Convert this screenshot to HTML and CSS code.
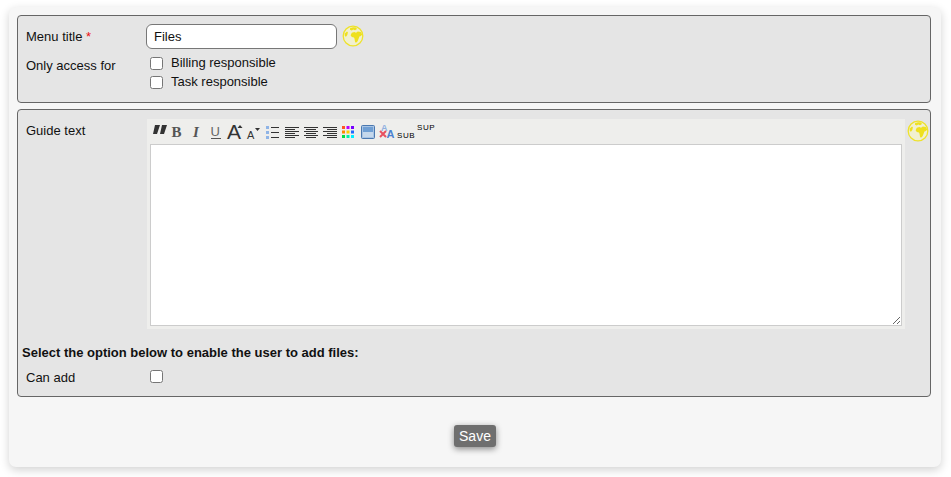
FILE: index.html
```html
<!DOCTYPE html>
<html lang="en">
<head>
<meta charset="utf-8">
<title>Files</title>
<link rel="stylesheet" href="styles.css">
</head>
<body>
<svg class="defs" width="0" height="0" aria-hidden="true">
  <symbol id="globe" viewBox="0 0 22 22">
    <circle cx="11" cy="11" r="9.800" fill="#f1f0cf" stroke="#eee22a" stroke-width="1.300"/>
    <path fill="#eee01e" d="M8 3.200 11 2.200l3 .4 1 1.400-2 1.200-1.800-.6-1.400.8-1.800-.6zM8.600 10.200l1.200-2.400 2.600-.8 1.600.8 1.800-1.200 3 .4 1.400 2.800-1.800 1.400-1 .2-.8 2.400-1 2.400-1.600 1.600-.9-.8-.6-3.200-.5-1.400-2.200-.4z"/>
    <path fill="#eee01e" d="M2.800 8.600 5 6.400l.9.8-.6 2.800-1.300 1.800-1.200-.8z"/>
  </symbol>
</svg>
<main class="card">
  <section class="panel panel-title">
    <div class="row row-title">
      <span class="label">Menu title <span class="req">*</span></span>
      <input class="text-input" type="text" value="Files">
      <svg class="globe" width="22" height="22"><use href="#globe"/></svg>
    </div>
    <div class="row row-access">
      <span class="label">Only access for</span>
      <div class="checks">
        <label class="check"><input type="checkbox"><span>Billing responsible</span></label>
        <label class="check"><input type="checkbox"><span>Task responsible</span></label>
      </div>
    </div>
  </section>
  <section class="panel panel-guide">
    <div class="row row-guide">
      <span class="label label-guide">Guide text</span>
      <div class="editor">
        <div class="toolbar">
          <svg class="tool" viewBox="0 0 16 16"><path fill="#333" d="M4 1h5L6 10H2zM11 1h5l-3 9H9z"/></svg>
          <svg class="tool" viewBox="0 0 16 16"><text x="1.500" y="13" class="t-serif t-b">B</text></svg>
          <svg class="tool" viewBox="0 0 16 16"><text x="4" y="13" class="t-serif t-i">I</text></svg>
          <svg class="tool" viewBox="0 0 16 16"><text x="2.500" y="12" class="t-sans t-u">U</text><path stroke="#555" d="M3 14.500h10"/></svg>
          <svg class="tool" viewBox="0 0 16 16"><text x="0" y="15" class="t-sans t-big">A</text><path fill="#333" d="M10.500 4 13 1l2.500 3z"/></svg>
          <svg class="tool" viewBox="0 0 16 16"><text x="1" y="15" class="t-sans t-small">A</text><path fill="#333" d="M9 4h5l-2.500 3z"/></svg>
          <svg class="tool" viewBox="0 0 16 16"><path fill="#8fb4e6" d="M1 2h3v3H1zM1 7h3v3H1zM1 12h3v3H1z"/><path stroke="#333" d="M6 3.500h8M6 8.500h8M6 13.500h8"/></svg>
          <svg class="tool" viewBox="0 0 16 16"><path stroke="#333" d="M1 3.500h14M1 5.500h10M1 7.500h14M1 9.500h10M1 11.500h14M1 13.500h10"/></svg>
          <svg class="tool" viewBox="0 0 16 16"><path stroke="#333" d="M1 3.500h14M3 5.500h10M1 7.500h14M3 9.500h10M1 11.500h14M3 13.500h10"/></svg>
          <svg class="tool" viewBox="0 0 16 16"><path stroke="#333" d="M1 3.500h14M5 5.500h10M1 7.500h14M5 9.500h10M1 11.500h14M5 13.500h10"/></svg>
          <svg class="tool" viewBox="0 0 16 16"><path fill="#f52" d="M1 2h3v3H1z"/><path fill="#b0f" d="M5.500 2h3v3h-3z"/><path fill="#70f" d="M10 2h3v3h-3z"/><path fill="#f80" d="M1 6.500h3v3H1z"/><path fill="#fc0" d="M5.500 6.500h3v3h-3z"/><path fill="#26f" d="M10 6.500h3v3h-3z"/><path fill="#0d4" d="M1 11h3v3H1z"/><path fill="#0ea" d="M5.500 11h3v3h-3z"/><path fill="#0ef" d="M10 11h3v3h-3z"/></svg>
          <svg class="tool" viewBox="0 0 16 16"><rect x="1.500" y="1.500" width="13" height="13" rx="1" fill="#a8c4e4" stroke="#4a78b0"/><rect x="3" y="3" width="10" height="5" fill="#6f9fd4"/><rect x="3" y="8" width="10" height="5" fill="#c5d8ec"/></svg>
          <svg class="tool" viewBox="0 0 16 16"><text x="2" y="7" class="t-sans t-rem">A</text><text x="7.500" y="14" class="t-sans t-rem2">A</text><path stroke="#e85060" stroke-width="2" d="M1 7l6 6M7 7l-6 6"/></svg>
          <svg class="tool" viewBox="0 0 16 16"><text x="-1" y="14" class="t-sup">SUB</text></svg>
          <svg class="tool" viewBox="0 0 16 16"><text x="0" y="6" class="t-sup">SUP</text></svg>
        </div>
        <textarea class="area"></textarea>
      </div>
      <svg class="globe globe-guide" width="22" height="22"><use href="#globe"/></svg>
    </div>
    <p class="note">Select the option below to enable the user to add files:</p>
    <div class="row row-can">
      <span class="label">Can add</span>
      <input class="box-solo" type="checkbox">
    </div>
  </section>
  <div class="actions"><button class="save" type="button">Save</button></div>
</main>
</body>
</html>
```
FILE: styles.css
```css
* { box-sizing: border-box; }
html, body { margin: 0; padding: 0; background: #fff; }
body {
  width: 951px;
  height: 477px;
  overflow: hidden;
  font-family: "Liberation Sans", Arial, sans-serif;
  font-size: 13px;
  color: #111;
}
.defs { position: absolute; }
.card {
  margin: 7px 10px 0 9px;
  height: 460px;
  padding: 8px 10px 0 8px;
  background: #f6f6f6;
  border-radius: 7px;
  box-shadow: 0 3px 10px rgba(0,0,0,.18);
}
.panel {
  background: #e5e5e5;
  border: 1px solid #666;
  border-radius: 4px;
}
.panel-title { height: 88px; padding: 8px 0 0 8px; }
.panel-guide { height: 288px; margin-top: 6px; padding: 9px 0 0 4px; }
.row { display: flex; align-items: flex-start; }
.label { width: 120px; flex: none; }
.label-guide { padding-top: 4px; }
.req { color: #e11; }
.row-title { align-items: center; height: 25px; }
.text-input {
  width: 191px;
  height: 25px;
  padding: 0 7px;
  border: 1px solid #777;
  border-radius: 6px;
  background: #fff;
  font: 13px "Liberation Sans", Arial, sans-serif;
  color: #111;
}
.globe { margin-left: 5px; flex: none; }
.row-title .globe { margin-top: -2px; }
.row-access { margin-top: 3px; padding-top: 0; }
.row-access .label { padding-top: 6px; }
.checks { display: flex; flex-direction: column; margin-left: 4px; gap: 3px; margin-top: 3px;}
.check { display: flex; align-items: center; height: 16px; }
.check input, .box-solo {
  width: 13px;
  height: 13px;
  margin: 0;
  flex: none;
}
.check span { margin-left: 8px; position: relative; top: -1px; }
.row-guide { padding-left: 4px; }
.editor {
  width: 758px;
  height: 210px;
  margin-left: 1px;
  padding: 0 3px;
  background: #eeeeec;
  flex: none;
}
.toolbar { display: flex; gap: 3px; height: 25px; padding: 5px 0 0 1px; }
.tool { width: 16px; height: 16px; flex: none; display: block; overflow: visible; }
.area {
  display: block;
  width: 752px;
  height: 182px;
  margin: 0;
  border: 1px solid #ccc;
  background: #fff;
}
.globe-guide { margin-left: 2px; margin-top: 1px; }
.note { margin: 16px 0 0; font-weight: bold; font-size: 13px; line-height: 15px; }
.row-can { margin-top: 9px; padding-left: 4px; align-items: center; height: 16px; }
.box-solo { margin-left: 4px; position: relative; top: -1px; }
.actions { display: flex; justify-content: center; padding-top: 28px; padding-left: 2px; }
.save {
  height: 22px;
  width: 42px;
  padding: 0;
  border: 0;
  border-radius: 3px;
  background: #6f6f6f;
  color: #fff;
  font: 14px "Liberation Sans", Arial, sans-serif;
  box-shadow: 0 2px 6px rgba(0,0,0,.45);
}
.t-serif { font-family: "Liberation Serif", serif; fill: #555; }
.t-sans { font-family: "Liberation Sans", sans-serif; fill: #333; }
.t-b { font-size: 15px; font-weight: bold; }
.t-i { font-size: 15px; font-style: italic; font-weight: bold; }
.t-u { font-size: 13px; fill: #666; }
.t-big { font-size: 21px; }
.t-small { font-size: 11px; }
.t-rem { font-size: 9px; fill: #8fb0e0; font-weight: bold; }
.t-rem2 { font-size: 11px; fill: #4a80d0; font-weight: bold; }
.t-sup { font-family: "Liberation Sans", sans-serif; font-size: 8px; letter-spacing: .6px; fill: #000; }
```
